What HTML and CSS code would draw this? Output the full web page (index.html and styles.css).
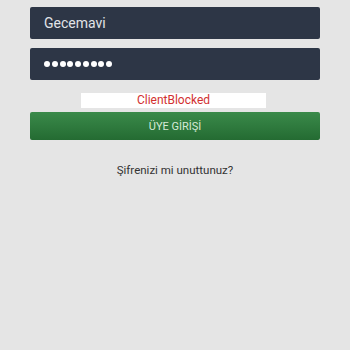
FILE: index.html
```html
<!DOCTYPE html>
<html>
<head>
<meta charset="utf-8">
<link rel="stylesheet" href="styles.css">
</head>
<body>
<div class="form">
  <div class="field">Gecemavi</div>
  <div class="field pass" aria-label="•••••••••">
    <span class="dot"></span><span class="dot"></span><span class="dot"></span><span class="dot"></span><span class="dot"></span><span class="dot"></span><span class="dot"></span><span class="dot"></span><span class="dot"></span>
  </div>
  <div class="error-row"><div class="error">ClientBlocked</div></div>
  <div class="btn">ÜYE GİRİŞİ</div>
  <div class="forgot">Şifrenizi mi unuttunuz?</div>
</div>
</body>
</html>
```

FILE: styles.css
```css
html, body {
  margin: 0;
  padding: 0;
  background: #e5e5e5;
  width: 350px;
  height: 350px;
  font-family: Roboto, "Liberation Sans", sans-serif;
}
.form {
  display: flex;
  flex-direction: column;
  padding: 7px 30px 0 30px;
}
.field {
  height: 32px;
  background: #2d3646;
  border-radius: 2px;
  color: #e2e4e8;
  font-size: 14px;
  padding-left: 14px;
  display: flex;
  align-items: center;
  margin-bottom: 9px;
}
.field.pass {
  gap: 1.75px;
}
.dot {
  width: 6px;
  height: 6px;
  border-radius: 50%;
  background: #ffffff;
}
.error-row {
  display: flex;
  justify-content: center;
  margin-top: 4px;
}
.error {
  width: 185px;
  margin-right: 3px;
  height: 15px;
  background: #ffffff;
  color: #d2302f;
  font-size: 12px;
  line-height: 15px;
  text-align: center;
}
.btn {
  margin-top: 4px;
  height: 28px;
  border-radius: 2px;
  background: linear-gradient(#3a8a4a, #246b32);
  color: #d6ead8;
  font-size: 11px;
  display: flex;
  align-items: center;
  justify-content: center;
}
.forgot {
  margin-top: 23px;
  text-align: center;
  font-size: 11.5px;
  color: #333333;
}
```
